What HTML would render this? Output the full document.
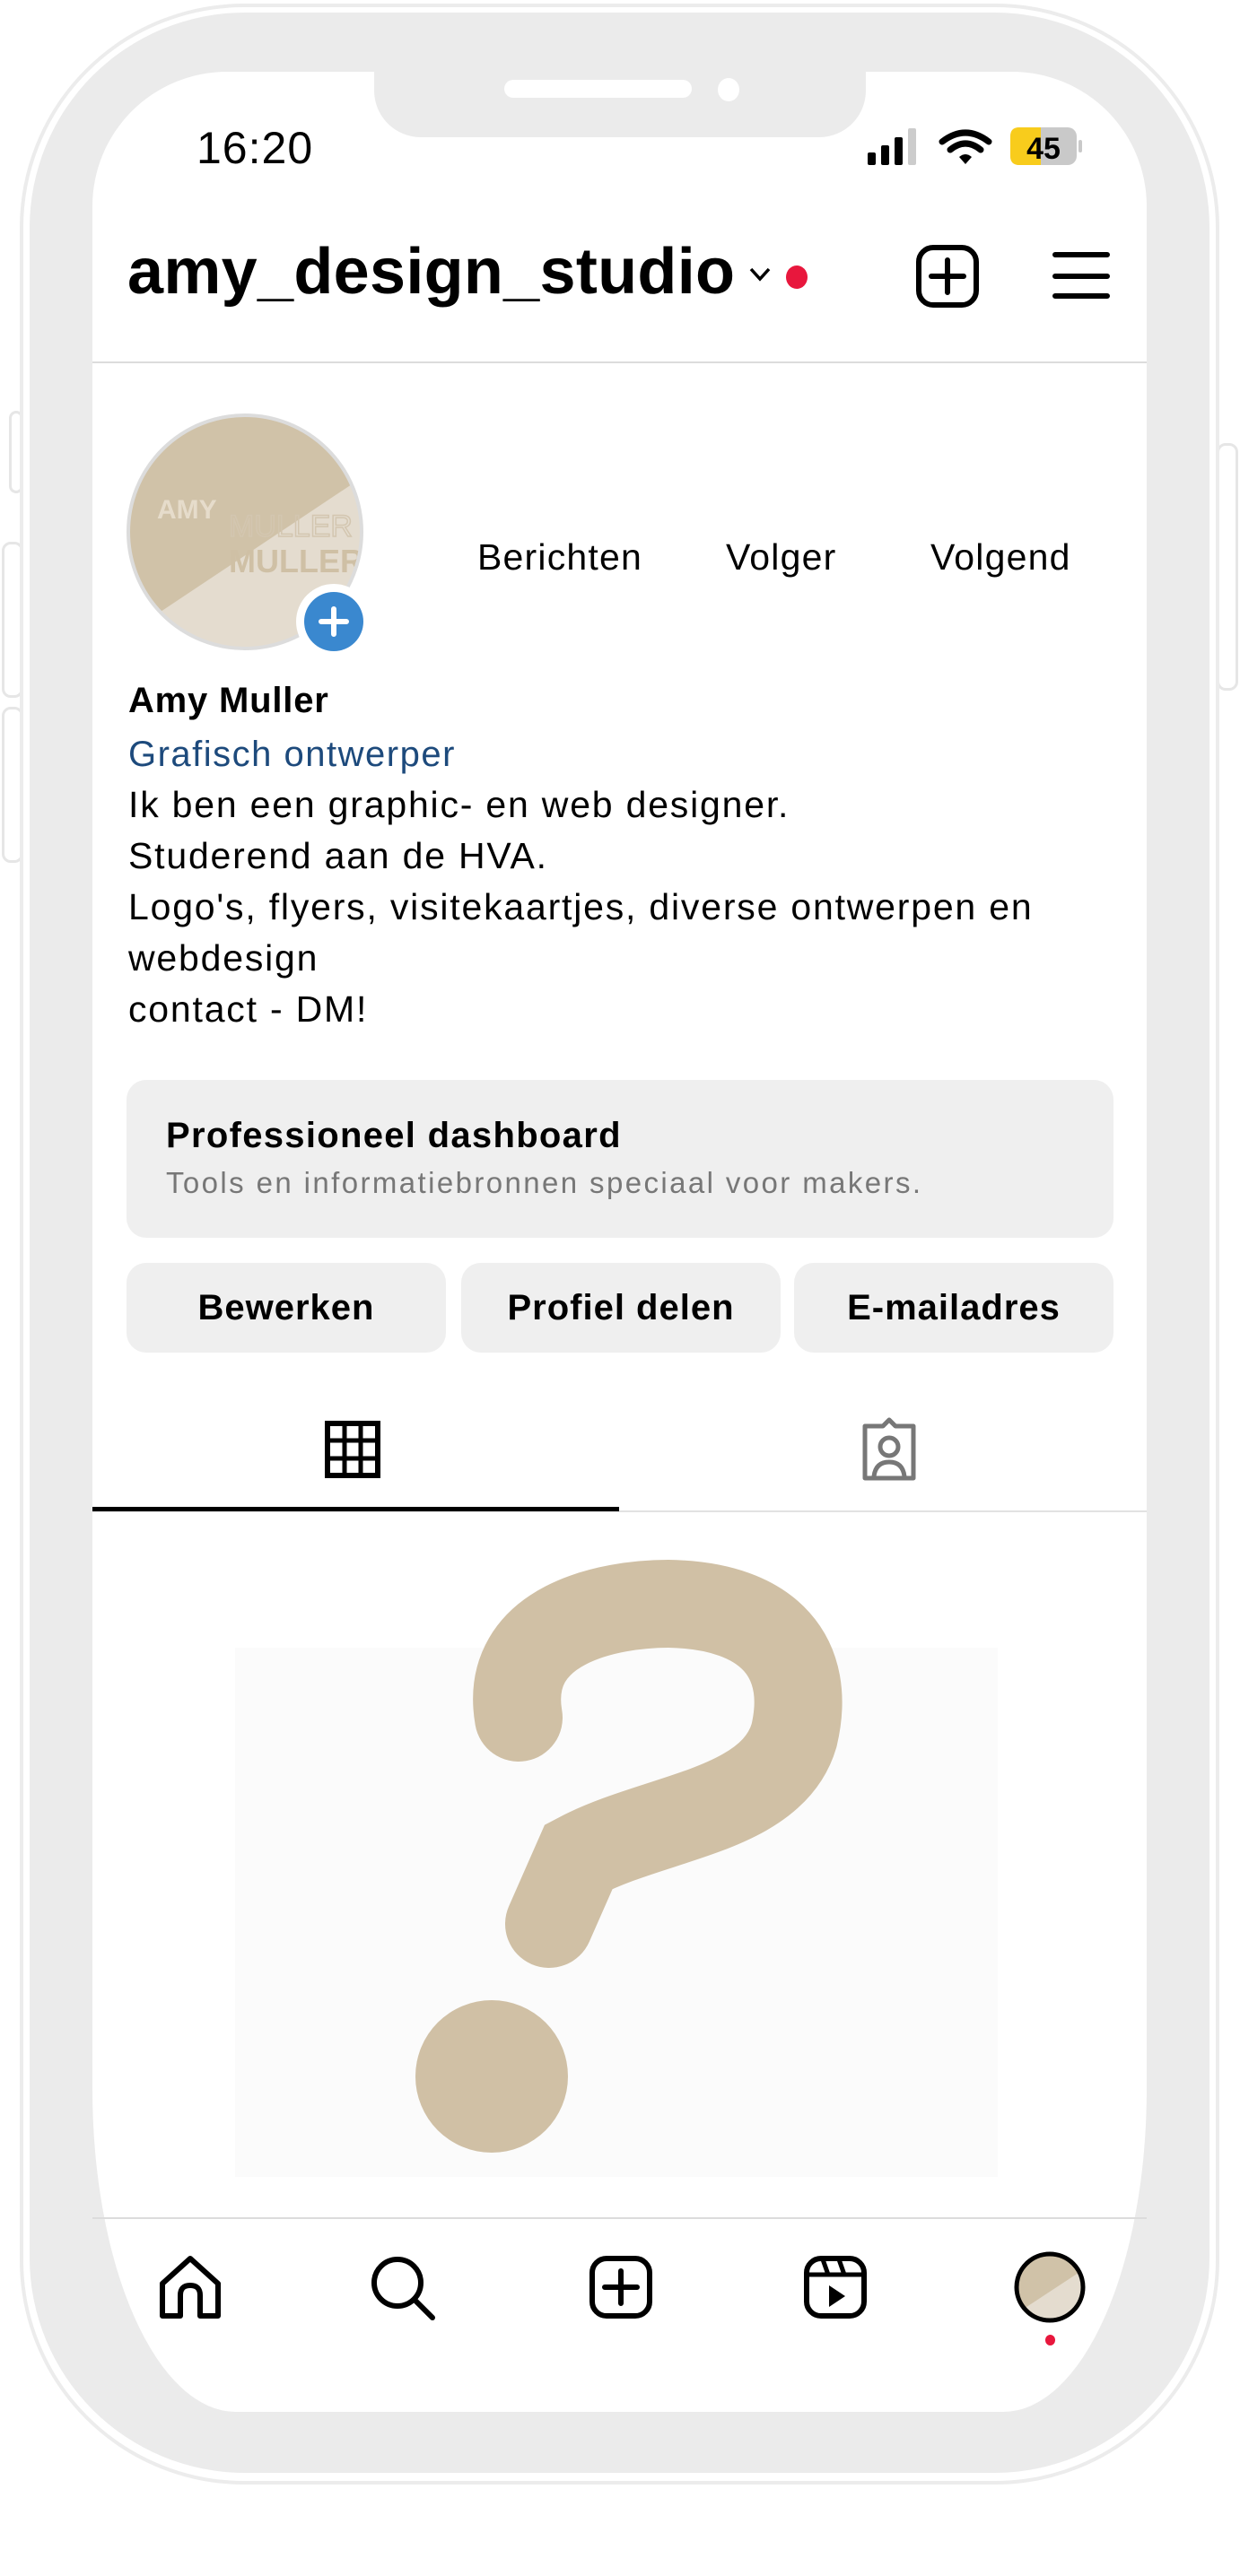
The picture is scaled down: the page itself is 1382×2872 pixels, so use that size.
<!DOCTYPE html>
<html><head><meta charset="utf-8"><style>
*{margin:0;padding:0;box-sizing:border-box}
body{width:1382px;height:2872px;background:#fff;position:relative;overflow:hidden;font-family:"Liberation Sans",Arial,sans-serif;color:#000}
.abs{position:absolute}
.t{position:absolute;white-space:nowrap}
.btn{position:absolute;top:1408px;height:100px;width:356px;background:#efefef;border-radius:22px;font-size:40px;font-weight:bold;text-align:center;line-height:100px;letter-spacing:1px}
</style></head><body>
<!-- side buttons -->
<div class="abs" style="left:10px;top:458px;width:16px;height:92px;border:3px solid #e6e6e6;border-radius:8px"></div>
<div class="abs" style="left:2px;top:604px;width:24px;height:174px;border:3px solid #e6e6e6;border-radius:10px"></div>
<div class="abs" style="left:2px;top:788px;width:24px;height:174px;border:3px solid #e6e6e6;border-radius:10px"></div>
<div class="abs" style="left:1356px;top:494px;width:24px;height:276px;border:3px solid #e6e6e6;border-radius:10px"></div>
<!-- phone -->
<div class="abs" style="left:22px;top:4px;width:1337px;height:2766px;border:4px solid #ececec;border-radius:250px;background:#fff"></div>
<div class="abs" style="left:33px;top:14px;width:1315px;height:2743px;border-radius:240px;background:#ebebeb"></div>
<div class="abs" style="left:103px;top:80px;width:1175px;height:2609px;border-radius:150px 150px 160px 160px/150px 150px 360px 360px;background:#fff"></div>
<div class="abs" style="left:417px;top:70px;width:548px;height:83px;background:#ebebeb;border-radius:0 0 52px 52px"></div>
<div class="abs" style="left:562px;top:89px;width:209px;height:20px;background:#fff;border-radius:10px"></div>
<div class="abs" style="left:800px;top:87px;width:24px;height:26px;background:#fff;border-radius:50%"></div>
<!-- status -->
<div class="t" style="left:219px;top:136px;font-size:50px;font-weight:500;letter-spacing:1px">16:20</div>
<svg class="abs" style="left:966px;top:140px" width="240" height="48" viewBox="0 0 240 48">
<rect x="1" y="30" width="9" height="14" rx="2"/><rect x="16" y="22" width="9" height="22" rx="2"/><rect x="31" y="13" width="9" height="31" rx="2"/><rect x="46" y="3" width="9" height="41" rx="2" fill="#ccc"/>
<path d="M84 18 Q110 -2 136 18" stroke="#000" stroke-width="7" fill="none" stroke-linecap="round"/>
<path d="M93 27 Q110 13 127 27" stroke="#000" stroke-width="7" fill="none" stroke-linecap="round"/>
<path d="M103 35 L110 43 L117 35 Q110 29 103 35Z"/>
<rect x="160" y="2" width="74" height="42" rx="10" fill="#c9c9c9"/>
<path d="M170 2 H194 V44 H170 Q160 44 160 34 V12 Q160 2 170 2Z" fill="#f8cc1c"/>
<rect x="236" y="16" width="4" height="14" rx="2" fill="#c9c9c9"/>
<text x="197" y="37" font-size="34" font-weight="bold" text-anchor="middle" font-family="Liberation Sans">45</text>
</svg>
<!-- header -->
<div class="t" style="left:142px;top:262px;font-size:72px;font-weight:bold;letter-spacing:0.3px">amy_design_studio</div>
<svg class="abs" style="left:834px;top:296px" width="26" height="20"><path d="M3 4 L13 15 L23 4" stroke="#000" stroke-width="3.5" fill="none"/></svg>
<div class="abs" style="left:876px;top:296px;width:24px;height:26px;border-radius:50%;background:#e8173d"></div>
<svg class="abs" style="left:1020px;top:272px" width="72" height="72"><rect x="4" y="4" width="64" height="64" rx="16" stroke="#000" stroke-width="6" fill="none"/><path d="M36 18V54M18 36H54" stroke="#000" stroke-width="6" stroke-linecap="round"/></svg>
<svg class="abs" style="left:1172px;top:278px" width="66" height="58"><path d="M4 6H62M4 30H62M4 52H62" stroke="#000" stroke-width="6" stroke-linecap="round"/></svg>
<div class="abs" style="left:103px;top:403px;width:1175px;height:2px;background:#dcdcdc"></div>
<!-- avatar -->
<svg class="abs" style="left:140px;top:458px" width="270" height="280" viewBox="0 0 270 280">
<defs><clipPath id="c"><circle cx="133" cy="135" r="130"/></clipPath></defs>
<g clip-path="url(#c)"><rect width="270" height="280" fill="#e4dccf"/><path d="M0 0H270V70L0 250Z" fill="#d0c2a8"/>
<text x="35" y="120" font-size="30" font-weight="bold" fill="#e6dccb" font-family="Liberation Sans">AMY</text>
<text x="115" y="180" font-size="36" font-weight="bold" fill="#cfc0a5" font-family="Liberation Sans">MULLER</text>
<text x="115" y="140" font-size="34" fill="none" stroke="#d3c6b0" stroke-width="1.5" font-family="Liberation Sans">MULLER</text></g>
<circle cx="133" cy="135" r="130" fill="none" stroke="#dcdcdc" stroke-width="4"/>
</svg>
<div class="abs" style="left:330px;top:651px;width:84px;height:84px;border-radius:50%;background:#fff"></div>
<div class="abs" style="left:339px;top:660px;width:66px;height:66px;border-radius:50%;background:#3a88cf"></div>
<svg class="abs" style="left:339px;top:660px" width="66" height="66"><path d="M33 19V47M19 33H47" stroke="#fff" stroke-width="6" stroke-linecap="round"/></svg>
<!-- stats -->
<div class="t" style="left:532px;top:598px;font-size:41px;letter-spacing:1.2px">Berichten</div>
<div class="t" style="left:809px;top:598px;font-size:41px;letter-spacing:1.2px">Volger</div>
<div class="t" style="left:1037px;top:598px;font-size:41px;letter-spacing:1.2px">Volgend</div>
<!-- bio -->
<div class="t" style="left:143px;top:756px;font-size:40px;font-weight:bold;line-height:50px;letter-spacing:0.8px">Amy Muller</div>
<div class="t" style="left:143px;top:813px;font-size:40px;color:#1d4a7c;line-height:56px;letter-spacing:1.5px">Grafisch ontwerper</div>
<div class="t" style="left:143px;top:869px;font-size:41px;line-height:57px;letter-spacing:1.8px">Ik ben een graphic- en web designer.<br>Studerend aan de HVA.<br>Logo's, flyers, visitekaartjes, diverse ontwerpen en<br>webdesign<br>contact - DM!</div>
<!-- dashboard -->
<div class="abs" style="left:141px;top:1204px;width:1100px;height:176px;background:#efefef;border-radius:22px"></div>
<div class="t" style="left:185px;top:1244px;font-size:40px;font-weight:bold;letter-spacing:1.3px">Professioneel dashboard</div>
<div class="t" style="left:185px;top:1300px;font-size:33px;color:#777;letter-spacing:2.4px">Tools en informatiebronnen speciaal voor makers.</div>
<div class="btn" style="left:141px">Bewerken</div>
<div class="btn" style="left:514px">Profiel delen</div>
<div class="btn" style="left:885px">E-mailadres</div>
<!-- tabs -->
<svg class="abs" style="left:362px;top:1584px" width="62" height="64"><rect x="3" y="3" width="56" height="58" fill="none" stroke="#000" stroke-width="6"/><path d="M22 3V61M40 3V61M3 22H59M3 42H59" stroke="#000" stroke-width="5"/></svg>
<svg class="abs" style="left:956px;top:1580px" width="70" height="72"><path d="M8 10H28L35 3L42 10H62V68H8Z" fill="none" stroke="#777" stroke-width="5" stroke-linejoin="round"/><circle cx="35" cy="33" r="10" fill="none" stroke="#777" stroke-width="5"/><path d="M18 66Q20 50 35 50Q50 50 52 66" fill="none" stroke="#777" stroke-width="5"/></svg>
<div class="abs" style="left:103px;top:1684px;width:1175px;height:2px;background:#e2e2e2"></div>
<div class="abs" style="left:103px;top:1680px;width:587px;height:5px;background:#000"></div>
<!-- image -->
<div class="abs" style="left:262px;top:1837px;width:850px;height:590px;background:#fbfbfb"></div>
<svg class="abs" style="left:0;top:0" width="1382" height="2500">
<path d="M578 1915 C560 1810 680 1788 745 1788 C860 1790 905 1850 885 1935 C860 2020 730 2025 645 2070 L612 2145" stroke="#d0c0a5" stroke-width="98" fill="none" stroke-linecap="round"/>
<circle cx="548" cy="2315" r="85" fill="#d0c0a5"/>
</svg>
<!-- bottom nav -->
<div class="abs" style="left:103px;top:2472px;width:1175px;height:2px;background:#dcdcdc"></div>
<svg class="abs" style="left:176px;top:2514px" width="72" height="72"><path d="M5 68V32L36 4L67 32V68H47V45Q47 34 36 34Q25 34 25 45V68Z" fill="none" stroke="#000" stroke-width="6" stroke-linejoin="round"/></svg>
<svg class="abs" style="left:412px;top:2514px" width="76" height="76"><circle cx="31" cy="31" r="26" fill="none" stroke="#000" stroke-width="6"/><path d="M50 50L70 70" stroke="#000" stroke-width="6" stroke-linecap="round"/></svg>
<svg class="abs" style="left:656px;top:2514px" width="72" height="72"><rect x="4" y="4" width="64" height="64" rx="16" stroke="#000" stroke-width="6" fill="none"/><path d="M36 18V54M18 36H54" stroke="#000" stroke-width="6" stroke-linecap="round"/></svg>
<svg class="abs" style="left:895px;top:2514px" width="72" height="72"><rect x="4" y="4" width="64" height="64" rx="16" stroke="#000" stroke-width="6" fill="none"/><path d="M4 22H68M22 5L28 22M40 5L46 22" stroke="#000" stroke-width="5"/><path d="M29 34L47 46L29 58Z"/></svg>
<svg class="abs" style="left:1129px;top:2508px" width="82" height="84"><defs><clipPath id="c2"><circle cx="41" cy="42" r="36"/></clipPath></defs><g clip-path="url(#c2)"><rect width="82" height="84" fill="#e4dccf"/><path d="M0 0H82V20L0 74Z" fill="#d0c2a8"/></g><circle cx="41" cy="42" r="37" fill="none" stroke="#000" stroke-width="5"/></svg>
<div class="abs" style="left:1165px;top:2603px;width:11px;height:12px;border-radius:50%;background:#e8173d"></div>
</body></html>
